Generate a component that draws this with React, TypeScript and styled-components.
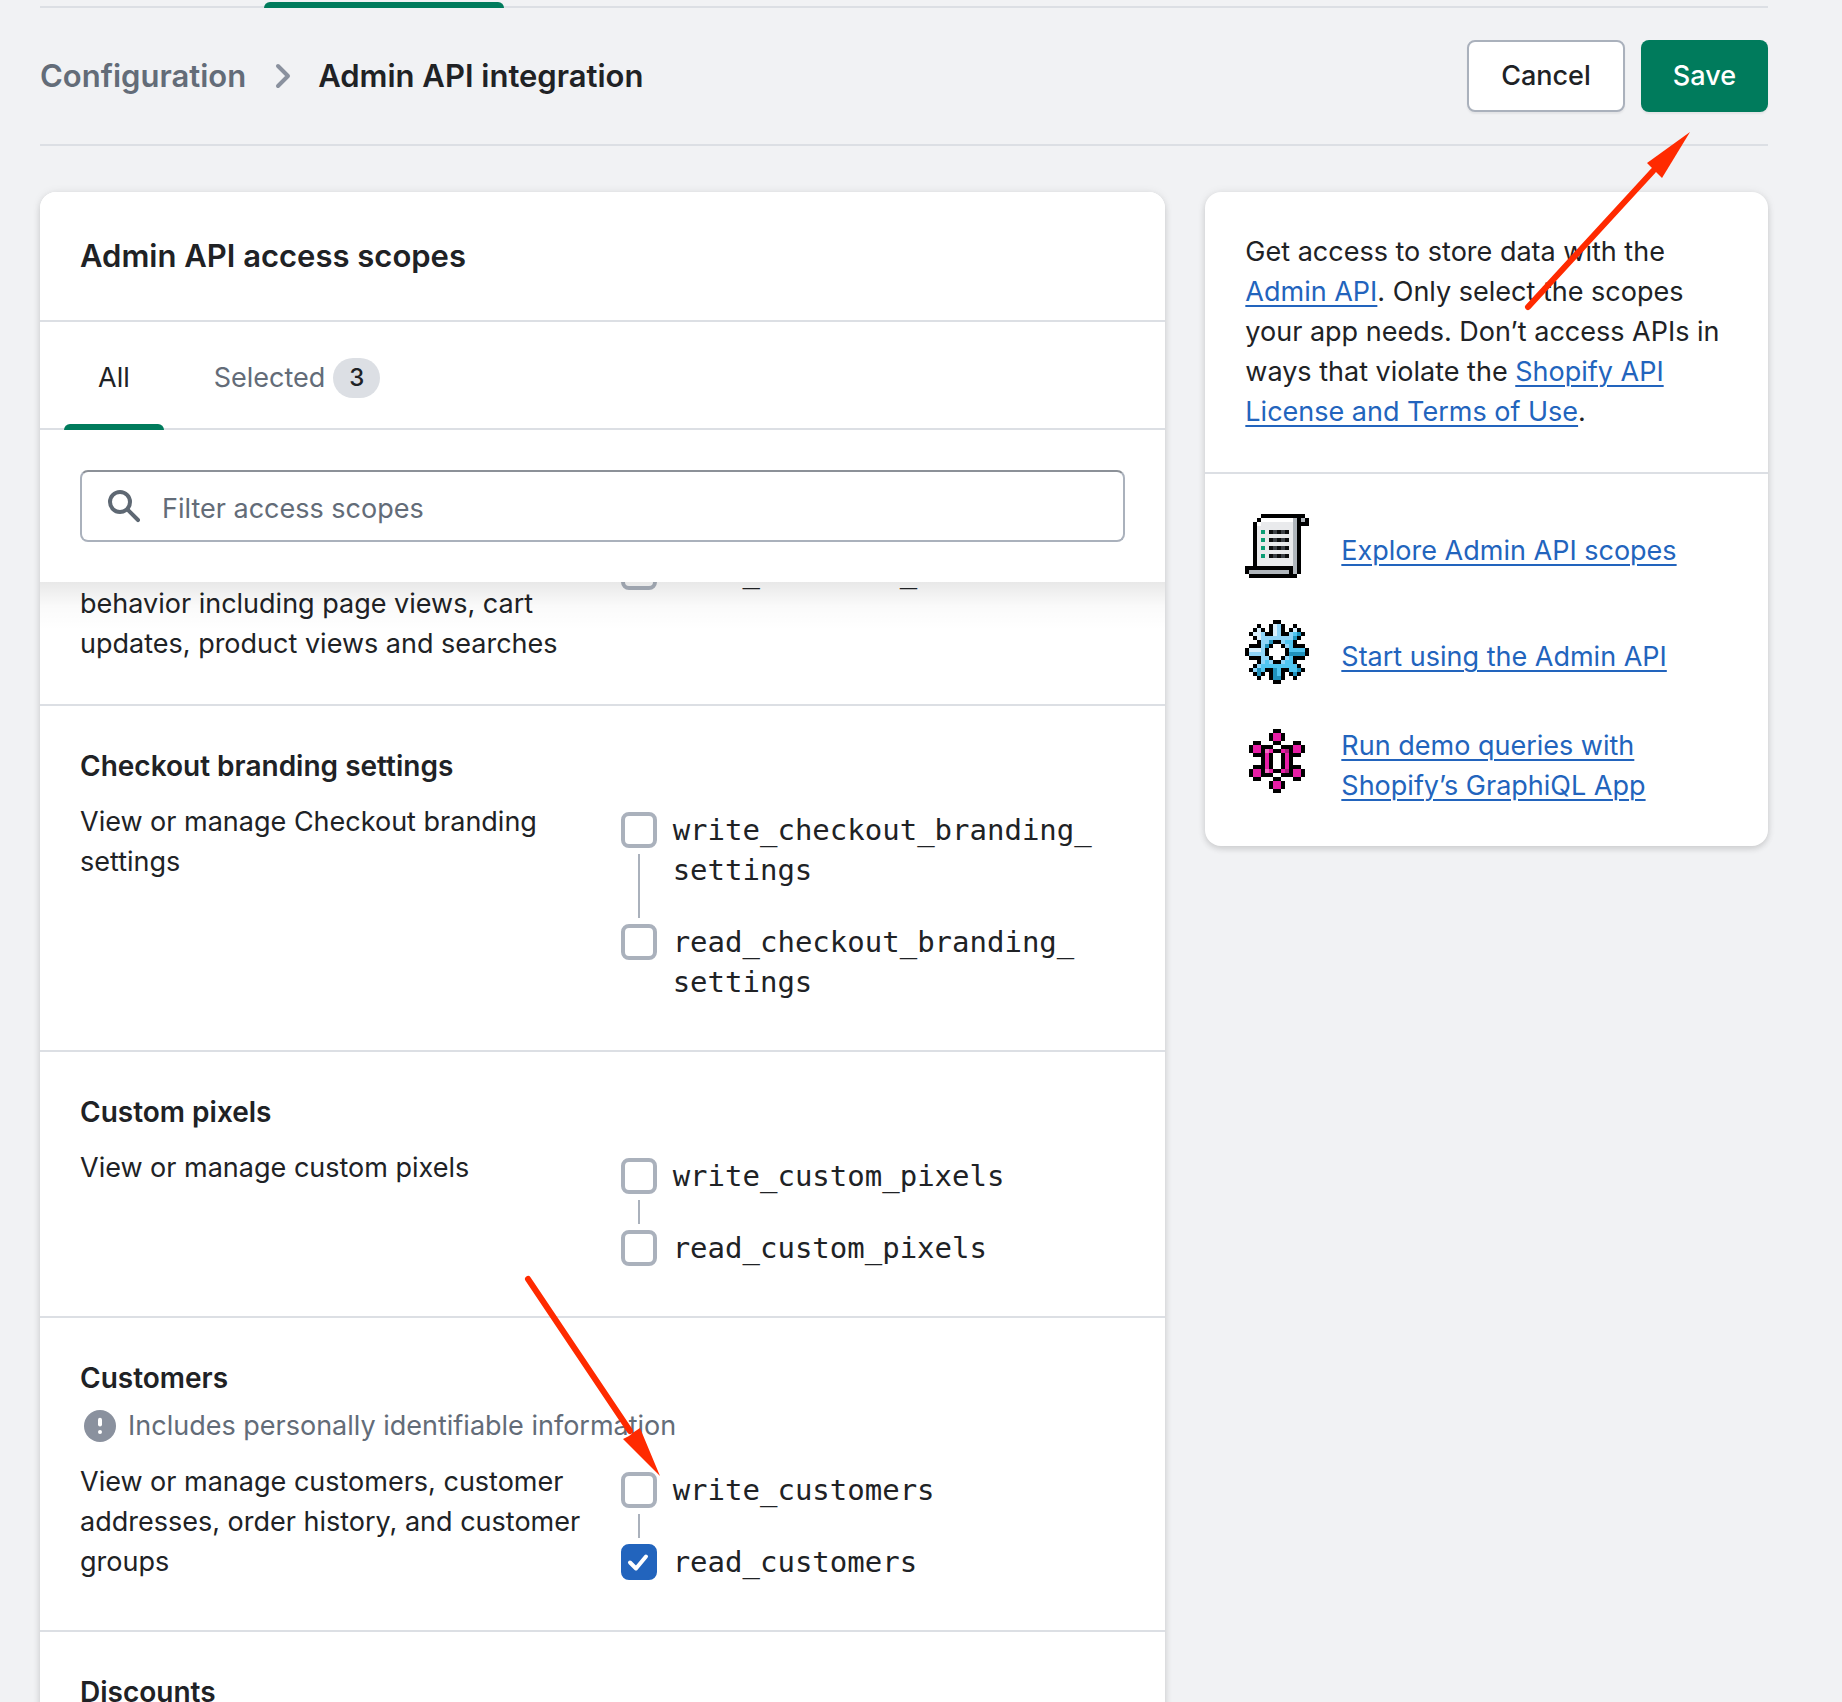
import React, { useState } from "react";
import styled, { createGlobalStyle, css } from "styled-components";

const color = {
  page: "#f1f2f4",
  surface: "#ffffff",
  text: "#202225",
  subdued: "#636c78",
  icon: "#5e6873",
  iconSoft: "#8a919e",
  divider: "#dcdfe4",
  control: "#aab1bc",
  primary: "#007b5c",
  link: "#2264bd",
  checked: "#2264bd",
  marker: "#ff2a00",
};

const sans = `Inter, "Liberation Sans", sans-serif`;
const mono = `"DejaVu Sans Mono", "Liberation Mono", monospace`;

const GlobalStyle = createGlobalStyle`
  *, *::before, *::after { box-sizing: border-box; }
  body {
    margin: 0;
    background: ${color.page};
    color: ${color.text};
    font-family: ${sans};
    font-size: 27px;
    line-height: 40px;
  }
  h1, h2, h3, p, ul { margin: 0; padding: 0; font-size: inherit; }
  button, input { font: inherit; color: inherit; }
`;

const Page = styled.div`
  position: relative;
  height: 100vh;
  overflow: hidden;
  padding: 0 74px 0 40px;
`;

const TopNav = styled.div`
  display: flex;
  padding: 2px 0 0 224px;
  border-bottom: 2px solid ${color.divider};
`;

const TopNavIndicator = styled.div`
  width: 240px;
  height: 6px;
  margin-bottom: -2px;
  border-radius: 6px 6px 0 0;
  background: ${color.primary};
`;

const Header = styled.header`
  display: flex;
  align-items: center;
  justify-content: space-between;
  padding: 32px 0;
  border-bottom: 2px solid ${color.divider};
`;

const Breadcrumb = styled.nav`
  display: flex;
  align-items: center;
  gap: 16px;
  font-size: 31px;
  font-weight: 600;
`;

const Crumb = styled.a`
  color: ${color.subdued};
  text-decoration: none;
`;

const PageTitle = styled.h1`
  font-weight: 600;
`;

const Actions = styled.div`
  display: flex;
  gap: 16px;
`;

const Button = styled.button<{ $primary?: boolean }>`
  height: 72px;
  padding: 0 32px;
  border: ${(p) => (p.$primary ? "0" : `2px solid ${color.control}`)};
  border-radius: 8px;
  background: ${(p) => (p.$primary ? color.primary : color.surface)};
  color: ${(p) => (p.$primary ? "#ffffff" : color.text)};
  box-shadow: 0 2px 2px rgba(0, 0, 0, 0.06);
  font-weight: 500;
`;

const Columns = styled.main`
  display: grid;
  grid-template-columns: minmax(0, 2fr) minmax(0, 1fr);
  align-items: start;
  gap: 40px;
  padding-top: 46px;
`;

const Card = styled.section`
  border-radius: 16px;
  background: ${color.surface};
  box-shadow: 0 0 10px rgba(23, 24, 24, 0.07), 0 3px 6px rgba(0, 0, 0, 0.12);
`;

const CardHeader = styled.div`
  padding: 44px 40px;
  border-bottom: 2px solid ${color.divider};
`;

const CardTitle = styled.h2`
  && {
    font-size: 31px;
  }
  font-weight: 600;
`;

const StickyTop = styled.div`
  position: relative;
  z-index: 1;
  border-radius: 16px 16px 0 0;
  background: ${color.surface};
`;

const ScrollShadow = styled.div`
  position: absolute;
  top: 100%;
  left: 0;
  right: 0;
  height: 48px;
  background: linear-gradient(rgba(0, 0, 0, 0.09), rgba(0, 0, 0, 0.02) 50%, rgba(0, 0, 0, 0));
  pointer-events: none;
`;

const TabList = styled.div`
  display: flex;
  gap: 16px;
  height: 108px;
  padding: 0 24px;
  border-bottom: 2px solid ${color.divider};
`;

const Tab = styled.button<{ $active?: boolean }>`
  position: relative;
  display: flex;
  align-items: center;
  gap: 8px;
  margin-bottom: -2px;
  padding: 4px 34px 0;
  border: 0;
  background: none;
  color: ${(p) => (p.$active ? color.text : color.subdued)};

  ${(p) =>
    p.$active &&
    css`
      &::after {
        content: "";
        position: absolute;
        left: 0;
        right: 0;
        bottom: 0;
        height: 6px;
        border-radius: 6px 6px 0 0;
        background: ${color.primary};
      }
    `}
`;

const Badge = styled.span`
  padding: 0 16px;
  border-radius: 20px;
  background: ${color.divider};
  color: ${color.text};
  font-size: 24px;
  font-weight: 500;
`;

const FilterBar = styled.div`
  padding: 40px;
`;

const FilterField = styled.label`
  display: flex;
  align-items: center;
  gap: 18px;
  height: 72px;
  padding: 0 22px;
  border: 2px solid ${color.control};
  border-top-color: #8c9198;
  border-radius: 8px;
`;

const FilterInput = styled.input`
  flex: 1;
  min-width: 0;
  height: 44px;
  padding: 4px 0 0;
  border: 0;
  outline: 0;
  background: none;

  &::placeholder {
    color: ${color.subdued};
    opacity: 1;
  }
`;

/* The list sits part-way scrolled under the filter bar. */
const ScopeList = styled.div`
  margin-top: -38px;
`;

const ScopeSection = styled.section`
  padding: 40px;

  & + & {
    border-top: 2px solid ${color.divider};
  }
`;

const ScopeTitle = styled.h3`
  && {
    font-size: 28px;
  }
  font-weight: 600;
`;

const Notice = styled.p`
  display: flex;
  align-items: center;
  gap: 8px;
  && {
    margin-top: 8px;
  }
  color: ${color.subdued};
`;

const ScopeBody = styled.div<{ $titled?: boolean }>`
  display: grid;
  grid-template-columns: repeat(2, minmax(0, 1fr));
  gap: 32px;
  margin-top: ${(p) => (p.$titled ? 16 : 0)}px;
`;

const Choices = styled.div<{ $raised?: boolean }>`
  padding: 8px 0 8px 2px;
  margin-top: ${(p) => (p.$raised ? -40 : 0)}px;
`;

const Choice = styled.label`
  display: flex;
  gap: 16px;
`;

const Control = styled.span`
  display: flex;
  flex-direction: column;
  align-items: center;
  gap: 6px;
  padding-top: 2px;
`;

const CheckSlot = styled.span`
  position: relative;
  display: block;
  width: 36px;
  height: 36px;

  svg {
    position: absolute;
    inset: 0;
    pointer-events: none;
  }
`;

const Checkbox = styled.input`
  appearance: none;
  display: block;
  width: 36px;
  height: 36px;
  margin: 0;
  border: 4px solid ${color.control};
  border-radius: 8px;
  background: ${color.surface};

  &:checked {
    border-color: ${color.checked};
    background: ${color.checked};
  }
`;

const Connector = styled.span`
  flex: 1;
  width: 2px;
  margin-bottom: 4px;
  background: ${color.control};
`;

const ScopeName = styled.span`
  min-width: 0;
  font-family: ${mono};
  font-size: 29px;

  ${Choice}:not(:last-child) & {
    padding-bottom: 32px;
  }
`;

const HelpText = styled.p`
  && {
    padding: 40px;
  }
`;

const Link = styled.a`
  color: ${color.link};
  text-decoration: underline;
  text-decoration-thickness: 2px;
  text-underline-offset: 4px;
`;

const Resources = styled.ul`
  && {
    padding: 40px;
  }
  display: flex;
  flex-direction: column;
  gap: 32px;
  border-top: 2px solid ${color.divider};
  list-style: none;
`;

const Resource = styled.li`
  display: flex;
  align-items: center;
  gap: 32px;

  svg {
    box-sizing: content-box;
    flex: none;
    padding-bottom: 10px;
  }
`;

const SaveArrow = styled.svg`
  position: absolute;
  z-index: 2;
  top: 122px;
  right: 142px;
  pointer-events: none;
`;

const ScopeArrow = styled.svg`
  position: absolute;
  z-index: 2;
  top: 1269px;
  left: 518px;
  pointer-events: none;
`;

type Palette = Record<string, string>;

function PixelIcon({ rows, palette }: { rows: string[]; palette: Palette }) {
  return (
    <svg width="64" height="64" viewBox="0 0 16 16" shapeRendering="crispEdges" aria-hidden="true">
      {rows.flatMap((row, y) =>
        [...row].map((cell, x) =>
          palette[cell] ? (
            <rect key={`${x}-${y}`} x={x} y={y} width="1" height="1" fill={palette[cell]} />
          ) : null
        )
      )}
    </svg>
  );
}

const scroll = {
  rows: [
    "....###########.",
    "...#wwwwwwwwg#g#",
    "..#wllllllllg###",
    "..#lllllllllg#..",
    "..#lelkdkdklg#..",
    "..#lllllllllg#..",
    "..#lelkdkdklg#..",
    "..#lllllllllg#..",
    "..#lelkdkdklg#..",
    "..#lllllllllg#..",
    "..#lelkdkdklg#..",
    "..#lllllllllg#..",
    "..#lllllllllg#..",
    "############g#..",
    "#gggggggggg#g#..",
    ".############...",
  ],
  palette: { "#": "#000000", w: "#ffffff", l: "#e9eaec", g: "#afb5bb", e: "#0a9c74", k: "#0c0d0e", d: "#3c4045" },
};

const gear = {
  rows: [
    ".......##.......",
    "...#..#WM#..#...",
    "..#W#.#WM#.#W#..",
    ".#WWM##WM##MCT#.",
    "..#WMMMMMMMMT#..",
    "...#MMT##MCC#...",
    ".###MT#..#MC###.",
    "#WWWM#....#CCCC#",
    "#MMMM#....#TTTT#",
    ".###MM#..#MC###.",
    "...#MCM##MCC#...",
    "..#MCCCCCCCCC#..",
    ".#MTC##TC##CCT#.",
    "..#T#.#TC#.#T#..",
    "...#..#TT#..#...",
    ".......##.......",
  ],
  palette: { "#": "#000000", W: "#d8effc", M: "#8fd4f8", C: "#4fc5f1", T: "#2092bd" },
};

const graph = {
  rows: [
    ".......##.......",
    "......#pp#......",
    "......#pp#......",
    "..##...##...##..",
    ".#pp###..###pp#.",
    ".#pp#lp##pd#pp#.",
    "..###p#..#p###..",
    "....#p#..#p#....",
    "....#p#..#p#....",
    "..###p#..#p###..",
    ".#pp#lp##pd#pp#.",
    ".#pp###..###pp#.",
    "..##...##...##..",
    "......#pp#......",
    "......#pp#......",
    ".......##.......",
  ],
  palette: { "#": "#000000", p: "#e81ea6", l: "#f36cc4", d: "#ab1f7e" },
};

const ChevronIcon = () => (
  <svg width="40" height="40" viewBox="0 0 20 20" fill="none" stroke={color.iconSoft} strokeWidth="2" strokeLinecap="round" strokeLinejoin="round" aria-hidden="true">
    <path d="M8 5l5 5-5 5" />
  </svg>
);

const SearchIcon = () => (
  <svg width="40" height="40" viewBox="0 0 20 20" fill={color.icon} aria-hidden="true">
    <path d="M8 12a4 4 0 1 1 0-8 4 4 0 0 1 0 8zm9.707 4.293-4.82-4.82A5.968 5.968 0 0 0 14 8 6 6 0 1 0 2 8a6 6 0 0 0 6 6 5.968 5.968 0 0 0 3.473-1.113l4.82 4.82a.997.997 0 0 0 1.414 0 .999.999 0 0 0 0-1.414z" />
  </svg>
);

const AlertIcon = () => (
  <svg width="40" height="40" viewBox="0 0 20 20" aria-hidden="true">
    <circle cx="10" cy="10" r="8" fill={color.iconSoft} />
    <path d="M10 6.9v2.4" stroke="#ffffff" strokeWidth="2" strokeLinecap="round" />
    <circle cx="10" cy="13" r="1" fill="#ffffff" />
  </svg>
);

const TickIcon = () => (
  <svg width="36" height="36" viewBox="0 0 36 36" fill="none" stroke="#ffffff" strokeWidth="4" strokeLinecap="round" strokeLinejoin="round" aria-hidden="true">
    <path d="M9 18.500l6 6L25 12.500" />
  </svg>
);

/* Lets a long scope name wrap after any of its underscores. */
function breakable(name: string) {
  return name.split("_").map((part, i, all) => (
    <React.Fragment key={i}>
      {part}
      {i < all.length - 1 && (
        <>
          _<wbr />
        </>
      )}
    </React.Fragment>
  ));
}

function ScopeChoice({ name, linked, initial = false }: { name: string; linked: boolean; initial?: boolean }) {
  const [checked, setChecked] = useState(initial);
  return (
    <Choice htmlFor={name}>
      <Control>
        <CheckSlot>
          <Checkbox id={name} type="checkbox" checked={checked} onChange={(e) => setChecked(e.target.checked)} />
          {checked && <TickIcon />}
        </CheckSlot>
        {linked && <Connector />}
      </Control>
      <ScopeName>{breakable(name)}</ScopeName>
    </Choice>
  );
}

type Scope = {
  title?: string;
  notice?: string;
  description?: string;
  names?: string[];
};

const scopes: Scope[] = [
  {
    description: "behavior including page views, cart updates, product views and searches",
    names: ["read_customer_events"],
  },
  {
    title: "Checkout branding settings",
    description: "View or manage Checkout branding settings",
    names: ["write_checkout_branding_settings", "read_checkout_branding_settings"],
  },
  {
    title: "Custom pixels",
    description: "View or manage custom pixels",
    names: ["write_custom_pixels", "read_custom_pixels"],
  },
  {
    title: "Customers",
    notice: "Includes personally identifiable information",
    description: "View or manage customers, customer addresses, order history, and customer groups",
    names: ["write_customers", "read_customers"],
  },
  { title: "Discounts" },
];

const granted = ["read_customers"];

export default function App() {
  const [filter, setFilter] = useState("");

  return (
    <Page>
      <GlobalStyle />
      <TopNav>
        <TopNavIndicator />
      </TopNav>

      <Header>
        <Breadcrumb>
          <Crumb href="#configuration">Configuration</Crumb>
          <ChevronIcon />
          <PageTitle>Admin API integration</PageTitle>
        </Breadcrumb>
        <Actions>
          <Button type="button">Cancel</Button>
          <Button type="button" $primary>
            Save
          </Button>
        </Actions>
      </Header>

      <Columns>
        <Card>
          <StickyTop>
            <CardHeader>
              <CardTitle>Admin API access scopes</CardTitle>
            </CardHeader>
            <TabList role="tablist">
              <Tab type="button" role="tab" aria-selected="true" $active>
                All
              </Tab>
              <Tab type="button" role="tab" aria-selected="false">
                Selected <Badge>3</Badge>
              </Tab>
            </TabList>
            <FilterBar>
              <FilterField htmlFor="filter">
                <SearchIcon />
                <FilterInput
                  id="filter"
                  type="text"
                  placeholder="Filter access scopes"
                  value={filter}
                  onChange={(e) => setFilter(e.target.value)}
                />
              </FilterField>
            </FilterBar>
            <ScrollShadow />
          </StickyTop>

          <ScopeList>
            {scopes.map((scope) => (
              <ScopeSection key={scope.title ?? "scrolled"}>
                {scope.title && <ScopeTitle>{scope.title}</ScopeTitle>}
                {scope.notice && (
                  <Notice>
                    <AlertIcon />
                    {scope.notice}
                  </Notice>
                )}
                {scope.names && (
                  <ScopeBody $titled={Boolean(scope.title)}>
                    <p>{scope.description}</p>
                    <Choices $raised={!scope.title}>
                      {scope.names.map((name, i, all) => (
                        <ScopeChoice key={name} name={name} linked={i < all.length - 1} initial={granted.includes(name)} />
                      ))}
                    </Choices>
                  </ScopeBody>
                )}
              </ScopeSection>
            ))}
          </ScopeList>
        </Card>

        <Card>
          <HelpText>
            Get access to store data with the <Link href="#admin-api">Admin API</Link>. Only select the scopes your app
            needs. Don’t access APIs in ways that violate the{" "}
            <Link href="#terms">Shopify API License and Terms of Use</Link>.
          </HelpText>
          <Resources>
            <Resource>
              <PixelIcon {...scroll} />
              <Link href="#scopes">Explore Admin API scopes</Link>
            </Resource>
            <Resource>
              <PixelIcon {...gear} />
              <Link href="#start">Start using the Admin API</Link>
            </Resource>
            <Resource>
              <PixelIcon {...graph} />
              <Link href="#graphiql">Run demo queries with Shopify’s GraphiQL App</Link>
            </Resource>
          </Resources>
        </Card>
      </Columns>

      <SaveArrow width="183" height="195" viewBox="0 0 183 195" aria-hidden="true">
        <path d="M11 185L136 49" stroke={color.marker} strokeWidth="6" strokeLinecap="round" />
        <path d="M173 10L130 41l6 6 4 4 5 5z" fill={color.marker} />
      </SaveArrow>
      <ScopeArrow width="152" height="217" viewBox="0 0 152 217" aria-hidden="true">
        <path d="M10 10L112 162" stroke={color.marker} strokeWidth="6" strokeLinecap="round" />
        <path d="M142 207L122 159l-6 4-5 4-6 3z" fill={color.marker} />
      </ScopeArrow>
    </Page>
  );
}
